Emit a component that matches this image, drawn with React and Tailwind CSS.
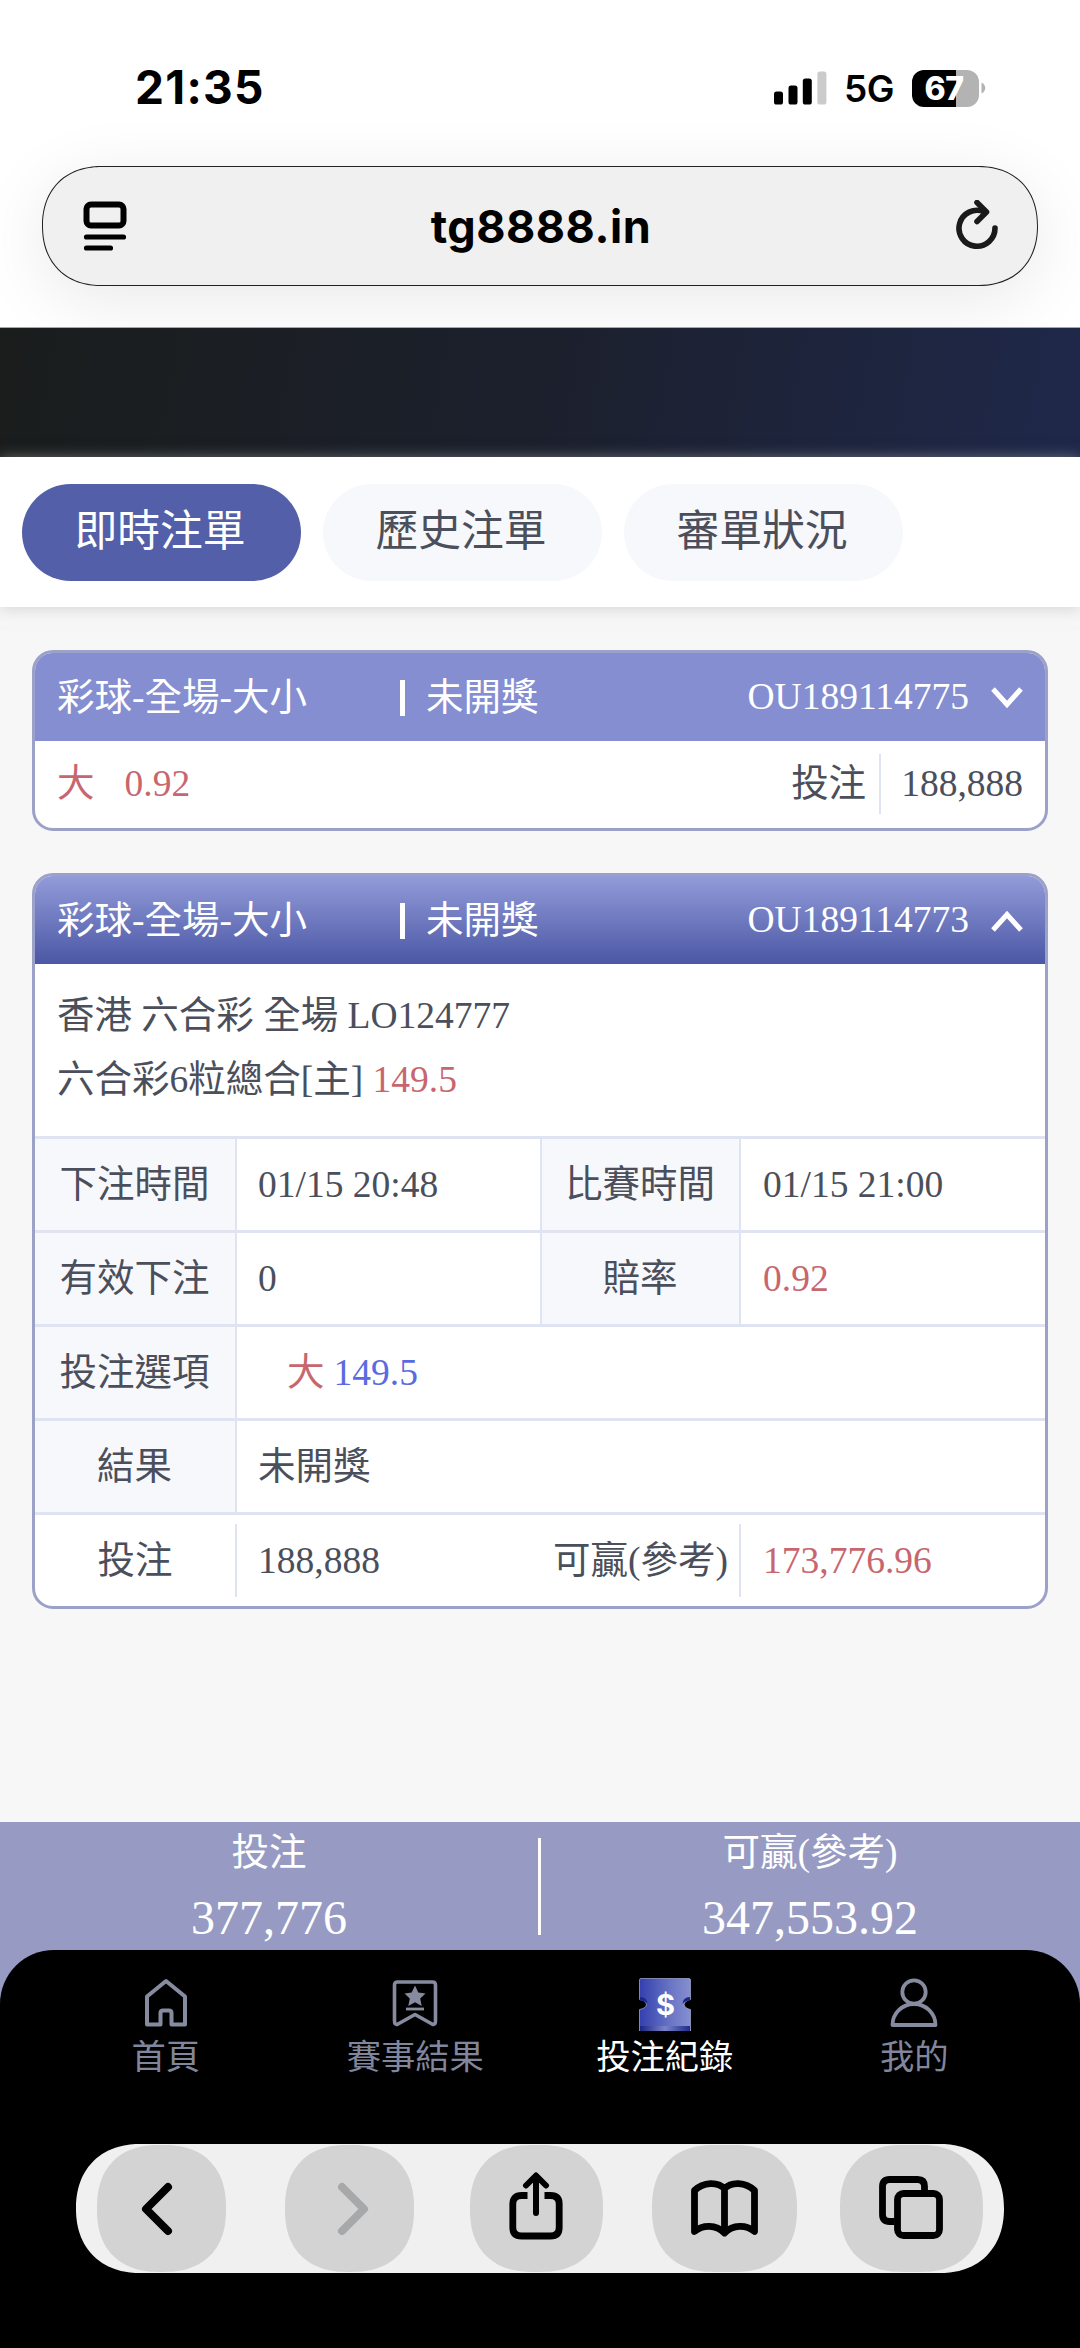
import { useState } from 'react';
import clsx from 'clsx';

const TABS = ['即時注單', '歷史注單', '審單狀況'];

const ReaderIcon = () => (
  <svg width="44" height="50" viewBox="0 0 44 50" fill="none" stroke="#000" strokeWidth="6" strokeLinecap="round">
    <rect x="3.5" y="3.5" width="37" height="21" rx="4.5" />
    <path d="M3.5 36h37M3.5 47h24" strokeWidth="5.2" />
  </svg>
);

const ReloadIcon = () => (
  <svg width="44" height="52" viewBox="0 0 44 52" fill="none" stroke="#1a1a1a" strokeWidth="5.6" strokeLinecap="round" strokeLinejoin="round">
    <path d="M40 28A18 18 0 1 1 29 11.700" />
    <path d="M22 2.500L31.500 12L22 21.500" />
  </svg>
);

const SignalIcon = () => (
  <svg width="53" height="34" viewBox="0 0 53 34">
    <rect x="0" y="20.5" width="9" height="13" rx="2.6" />
    <rect x="14.5" y="14.5" width="9" height="19" rx="2.6" />
    <rect x="28.8" y="7.5" width="9" height="26" rx="2.6" />
    <rect x="43.4" y="0.5" width="9" height="33" rx="2.6" fill="#cbcbcb" />
  </svg>
);

const Battery = () => (
  <div className="flex items-center">
    <div className="flex h-[37px] w-[67px] items-center justify-center rounded-[12px] bg-linear-to-r from-black from-[66%] to-[#b3b3b3] to-[66%] pt-[1px] pr-[3px] text-[32px] leading-none font-extrabold tracking-[-0.5px] text-white">
      67
    </div>
    <svg width="5" height="12" viewBox="0 0 5 12" className="ml-[2px]">
      <path d="M0.5 0.5C5.5 3 5.5 9 0.5 11.5Z" fill="#b3b3b3" />
    </svg>
  </div>
);

const StatusBar = () => (
  <div className="flex h-[166px] justify-between pt-[60px] pr-[94px] pl-[135px]">
    <div className="h-[56px] text-[46px] leading-[55px] font-bold tracking-[1.3px]">21:35</div>
    <div className="flex h-[56px] items-center">
      <SignalIcon />
      <div className="ml-[17px] w-[68px] pt-[2px] text-[37px] leading-[56px] font-semibold tracking-[-0.5px]">5G</div>
      <Battery />
    </div>
  </div>
);

const AddressBar = () => (
  <div className="mx-[42px] flex h-[120px] items-center justify-between rounded-[64px] border-[1.5px] border-[#222] bg-[#f0f0f0] pr-[38px] pl-[40px] shadow-[0_14px_70px_rgba(0,0,0,0.09)] [corner-shape:superellipse(1.15)]">
    <ReaderIcon />
    <div className="pt-[1px] text-[45px] leading-[56px] font-bold tracking-[0.5px]">tg8888.in</div>
    <ReloadIcon />
  </div>
);

const Chevron = ({ up }) => (
  <svg width="32" height="22" viewBox="0 0 32 22" fill="none" stroke="#fff" strokeWidth="5" className="ml-[22px]">
    <path d={up ? 'M2 20L16 4.500L30 20' : 'M2 2L16 17.500L30 2'} />
  </svg>
);

const CardHeader = ({ id, open }) => (
  <div
    className={clsx(
      'flex h-[88px] items-center pt-[1px] pr-[22px] pl-[22px] text-white',
      open ? 'bg-linear-to-b from-[#939cd9] to-[#4c57a5]' : 'bg-[#848ed0]'
    )}
  >
    <div className="w-[343px]">彩球-全場-大小</div>
    <div className="h-[36px] w-[5px] bg-white" />
    <div className="ml-[21px] flex-1">未開獎</div>
    <div className="pb-[1px]">{id}</div>
    <Chevron up={open} />
  </div>
);

const Card = ({ children }) => (
  <div className="overflow-hidden rounded-[21px] border-3 border-[#9ca1c8] bg-white">{children}</div>
);

const Label = ({ children }) => (
  <div className="flex items-center justify-center border-r-2 border-[#dfe3f2] bg-[#f7f8fc] pt-[1px] pr-[1px]">
    {children}
  </div>
);

const Value = ({ children, className }) => (
  <div className={clsx('flex items-center pt-[1px] pl-[21px]', className)}>{children}</div>
);

const Row = ({ wide, children }) => (
  <div
    className={clsx(
      'grid h-[94px] border-t-3 border-[#dfe3f2]',
      wide ? 'grid-cols-[202px_1fr]' : 'grid-cols-[202px_305px_199px_1fr]'
    )}
  >
    {children}
  </div>
);

const ClosedBet = () => (
  <Card>
    <CardHeader id="OU189114775" />
    <div className="flex h-[87px] items-center pr-[22px] pb-[2px] pl-[22px]">
      <span className="text-[#c8666e]">大</span>
      <span className="ml-[30px] flex-1 text-[#c8666e]">0.92</span>
      <span>投注</span>
      <div className="mr-[20px] ml-[13px] h-[60px] w-[2px] bg-[#dfe3f2]" />
      <span>188,888</span>
    </div>
  </Card>
);

const OpenBet = () => (
  <Card>
    <CardHeader id="OU189114773" open />
    <div className="h-[172px] pt-[20px] pl-[22px] leading-[64px]">
      <div>香港 六合彩 全場 LO124777</div>
      <div>
        六合彩6粒總合[主] <span className="text-[#c8666e]">149.5</span>
      </div>
    </div>
    <Row>
      <Label>下注時間</Label>
      <Value className="border-r-2 border-[#dfe3f2]">01/15 20:48</Value>
      <Label>比賽時間</Label>
      <Value className="pl-[22px]">01/15 21:00</Value>
    </Row>
    <Row>
      <Label>有效下注</Label>
      <Value className="border-r-2 border-[#dfe3f2]">0</Value>
      <Label>賠率</Label>
      <Value className="pl-[22px] text-[#c8666e]">0.92</Value>
    </Row>
    <Row wide>
      <Label>投注選項</Label>
      <Value>
        <span className="ml-[29px] text-[#c8666e]">大</span>
        <span className="ml-[9px] text-[#5a6ae0]">149.5</span>
      </Value>
    </Row>
    <Row wide>
      <Label>結果</Label>
      <Value>未開獎</Value>
    </Row>
    <Row>
      <div className="my-[9px] flex items-center justify-center border-r-2 border-[#dfe3f2] pt-[1px]">投注</div>
      <Value>188,888</Value>
      <div className="my-[9px] flex items-center justify-end border-r-2 border-[#dfe3f2] pt-[1px] pr-[11px] whitespace-nowrap">
        可贏(參考)
      </div>
      <Value className="pl-[22px] text-[#c8666e]">173,776.96</Value>
    </Row>
  </Card>
);

const Summary = () => (
  <div className="flex h-[200px] items-start bg-[#979bc3] text-white">
    <div className="w-[538px] pt-[7px] text-center">
      <div className="leading-[48px]">投注</div>
      <div className="mt-[13px] text-[48px] leading-[56px]">377,776</div>
    </div>
    <div className="mt-[16px] h-[97px] w-[3px] bg-white" />
    <div className="w-[539px] pt-[7px] pr-[1px] text-center">
      <div className="leading-[48px]">可贏(參考)</div>
      <div className="mt-[13px] text-[48px] leading-[56px]">347,553.92</div>
    </div>
  </div>
);

const HomeIcon = () => (
  <svg width="54" height="54" viewBox="0 0 54 54" fill="none" stroke="#868ba0" strokeWidth="4" strokeLinejoin="round">
    <path d="M8 19.500L27 4L46 19.500V47.500H32.500V36Q32.500 33.500 30 33.500H24Q21.500 33.500 21.500 36V47.500H8Z" />
  </svg>
);

const ResultIcon = () => (
  <svg width="54" height="54" viewBox="0 0 54 54" fill="none" stroke="#868ba0" strokeWidth="3.6" strokeLinejoin="round">
    <path d="M9.500 5H44.500Q47.500 5 47.500 8V44Q47.500 48.500 44 47L27 37.500L10 47Q6.500 48.500 6.500 44V8Q6.500 5 9.500 5Z" />
    <path d="M18 32H36" strokeWidth="2.800" />
    <path d="M27 8.500L30.300 15.500L37.500 16.400L32.200 21.500L33.700 29L27 25.200L20.300 29L21.800 21.500L16.500 16.400L23.700 15.500Z" fill="#868ba0" stroke="none" />
  </svg>
);

const TicketIcon = () => (
  <svg width="54" height="54" viewBox="0 0 54 54">
    <defs>
      <linearGradient id="ticket" x1="0" x2="1">
        <stop offset="0" stopColor="#3340ae" />
        <stop offset="0.65" stopColor="#6d78c6" />
        <stop offset="1" stopColor="#868fd0" />
      </linearGradient>
      <linearGradient id="fold" x1="0" x2="1">
        <stop offset="0" stopColor="#1a2682" />
        <stop offset="0.5" stopColor="#7a84cb" />
        <stop offset="1" stopColor="#1f2b88" />
      </linearGradient>
    </defs>
    <path
      d="M3 1.500H51Q52.500 1.500 52.500 3V22.500Q47 23.500 46 27.500Q47 31.500 52.500 32.500V54H1.500V32.500Q8 31.500 8.500 27.500Q8 23.500 1.500 22.500V3Q1.500 1.500 3 1.500Z"
      fill="url(#ticket)"
      stroke="#9aa0c8"
      strokeWidth="0.8"
    />
    <path d="M2 20Q9 20 9.500 27Q7.500 23.500 2 23.500ZM52 20Q45 20 44.500 27Q47 23.500 52 23.500Z" fill="#1d2985" />
    <rect x="2" y="49" width="50" height="5" fill="url(#fold)" />
    <text x="27.500" y="38" textAnchor="middle" fill="#fff" fontFamily="Inter, sans-serif" fontWeight="700" fontSize="29">
      $
    </text>
  </svg>
);

const UserIcon = () => (
  <svg width="54" height="54" viewBox="0 0 54 54" fill="none" stroke="#868ba0" strokeWidth="3.800" strokeLinejoin="round">
    <circle cx="27" cy="15" r="11.700" />
    <path d="M5.500 48A21.500 21 0 0 1 48.500 48Z" />
  </svg>
);

const NAV = [
  { label: '首頁', Icon: HomeIcon },
  { label: '賽事結果', Icon: ResultIcon },
  { label: '投注紀錄', Icon: TicketIcon, active: true },
  { label: '我的', Icon: UserIcon },
];

const BottomNav = () => (
  <nav className="grid h-[194px] grid-cols-4 px-[41px] pt-[27px] text-[34.3px] leading-[52px]">
    {NAV.map(({ label, Icon, active }) => (
      <div key={label} className={clsx('flex flex-col items-center', active ? 'text-white' : 'text-[#80869b]')}>
        <Icon />
        <div>{label}</div>
      </div>
    ))}
  </nav>
);

const ToolButton = ({ className, children }) => (
  <button
    className={clsx(
      'flex h-[127px] items-center justify-center rounded-[62px] bg-[#d3d3d3] [corner-shape:superellipse(1.2)]',
      className
    )}
  >
    {children}
  </button>
);

const Toolbar = () => (
  <div className="mx-[76px] flex h-[129px] items-center rounded-[66px] bg-[#f0f0f0] pl-[21px] [corner-shape:superellipse(1.15)]">
    <ToolButton className="w-[129px] pr-[10px]">
      <svg width="32" height="54" viewBox="0 0 32 54" fill="none" stroke="#000" strokeWidth="8" strokeLinecap="round" strokeLinejoin="round">
        <path d="M27 5L5 27L27 49" />
      </svg>
    </ToolButton>
    <ToolButton className="ml-[59px] w-[129px] pl-[6px]">
      <svg width="32" height="54" viewBox="0 0 32 54" fill="none" stroke="#a7a8aa" strokeWidth="8" strokeLinecap="round" strokeLinejoin="round">
        <path d="M5 5L27 27L5 49" />
      </svg>
    </ToolButton>
    <ToolButton className="ml-[56px] w-[133px] pr-[2px] pb-[5px]">
      <svg width="54" height="68" viewBox="0 0 54 68" fill="none" stroke="#000" strokeWidth="6.800" strokeLinecap="round" strokeLinejoin="round">
        <path d="M18.500 23.500H12.500Q3.800 23.500 3.800 32V55.500Q3.800 64 12.500 64H41.500Q50.200 64 50.200 55.500V32Q50.200 23.500 41.500 23.500H35.500" strokeLinecap="butt" />
        <path d="M27 41V4M17 13.500L27 3.500L37 13.500" strokeWidth="6" />
      </svg>
    </ToolButton>
    <ToolButton className="ml-[49px] w-[145px]">
      <svg width="67" height="57" viewBox="0 0 67 57" fill="none" stroke="#000" strokeWidth="6.800" strokeLinecap="round" strokeLinejoin="round">
        <path d="M33.500 8.500C27 1.700 12.500 1.500 3.500 10.500V51.500C12 44.500 25 44.500 33.500 53C42 44.500 55 44.500 63.500 51.500V10.500C54.500 1.500 40 1.700 33.500 8.500V52" />
      </svg>
    </ToolButton>
    <ToolButton className="ml-[43px] w-[143px] pr-[1px] pb-[1px]">
      <svg width="64" height="64" viewBox="0 0 64 64" fill="none" stroke="#000" strokeWidth="6.800">
        <path d="M15.500 45.500H10.500Q3.500 45.500 3.500 38.500V10.500Q3.500 3.500 10.500 3.500H38.500Q45.500 3.500 45.500 10.500V15" />
        <rect x="18.500" y="17.500" width="42" height="42" rx="6" />
      </svg>
    </ToolButton>
  </div>
);

export default function App() {
  const [tab, setTab] = useState(0);

  return (
    <div className="h-[2348px] w-[1080px] overflow-hidden bg-[#f7f7f7] font-['Liberation_Serif','Noto_Sans_CJK_TC',serif] text-[37.5px] leading-[48px] text-[#4b4f5b]">
      <header className="h-[328px] overflow-hidden border-b border-[#a8a8a8] bg-white font-[Inter,sans-serif] text-black">
        <StatusBar />
        <AddressBar />
      </header>
      <div className="h-[129px] bg-linear-[100deg] from-[#1a1d1c] via-[#1c202d] to-[#1f284a]" />

      <div className="relative flex h-[150px] items-center gap-[22px] bg-white pl-[21.5px] shadow-[0_2px_14px_rgba(190,190,190,0.6)]">
        {TABS.map((name, i) => (
          <button
            key={name}
            onClick={() => setTab(i)}
            className={clsx(
              'h-[97px] w-[279px] rounded-[49px] pr-[2px] text-[42.8px]',
              tab === i ? 'bg-[#535fa8] text-white' : 'bg-[#f7f8fc]'
            )}
          >
            {name}
          </button>
        ))}
      </div>

      <main className="flex h-[1215px] flex-col gap-[42px] px-[32px] pt-[43px]">
        <ClosedBet />
        <OpenBet />
      </main>

      <Summary />
      <footer className="relative -mt-[72px] h-[398px] rounded-t-[54px] bg-black">
        <BottomNav />
        <Toolbar />
      </footer>
    </div>
  );
}
